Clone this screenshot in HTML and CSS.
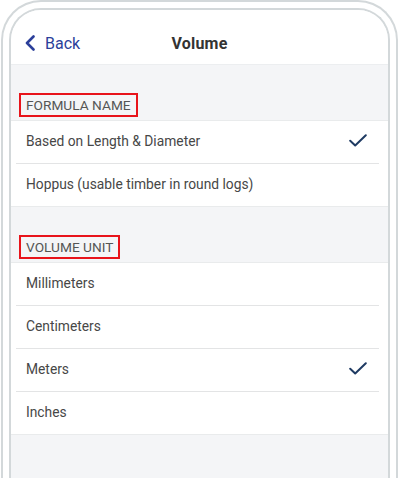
FILE: index.html
```html
<!DOCTYPE html>
<html>
<head>
<meta charset="utf-8">
<link rel="stylesheet" href="styles.css">
</head>
<body>
<div class="phone">
  <div class="screen">
    <header class="header">
      <div class="header-row">
        <a class="back">
          <svg class="chev" width="12" height="16" viewBox="0 0 12 16"><polyline points="9.5,1.5 3,8 9.5,14.5" fill="none" stroke="#2b3f9a" stroke-width="2.6" stroke-linecap="round" stroke-linejoin="round"/></svg>
          <span>Back</span>
        </a>
        <div class="title">Volume</div>
        <div class="spacer"></div>
      </div>
    </header>

    <div class="section-head"><span class="label">FORMULA NAME</span></div>
    <div class="list">
      <div class="row"><span>Based on Length &amp; Diameter</span>
        <svg class="check" width="18" height="13" viewBox="0 0 18 13"><polyline points="1.2,6.8 6.2,11.5 16.8,1.2" fill="none" stroke="#1f3b63" stroke-width="2" stroke-linecap="round" stroke-linejoin="round"/></svg>
      </div>
      <div class="row last"><span>Hoppus (usable timber in round logs)</span></div>
    </div>

    <div class="section-head"><span class="label">VOLUME UNIT</span></div>
    <div class="list">
      <div class="row"><span>Millimeters</span></div>
      <div class="row"><span>Centimeters</span></div>
      <div class="row"><span>Meters</span>
        <svg class="check" width="18" height="13" viewBox="0 0 18 13"><polyline points="1.2,6.8 6.2,11.5 16.8,1.2" fill="none" stroke="#1f3b63" stroke-width="2" stroke-linecap="round" stroke-linejoin="round"/></svg>
      </div>
      <div class="row last"><span>Inches</span></div>
    </div>
    <div class="filler"></div>
  </div>
</div>
</body>
</html>
```

FILE: styles.css
```css
html, body {
  margin: 0;
  padding: 0;
  background: #ffffff;
  overflow: hidden;
  width: 400px;
  height: 478px;
}
body {
  font-family: Roboto, "Liberation Sans", sans-serif;
}
.phone {
  box-sizing: border-box;
  margin-left: 1px;
  width: 397px;
  height: 478px;
  border: 2px solid #d3d8da;
  border-bottom: none;
  border-radius: 40px 40px 0 0;
  padding: 6px 6px 0 6px;
  background: #fff;
}
.screen {
  box-sizing: border-box;
  height: 100%;
  border: 2px solid #d3d8da;
  border-bottom: none;
  border-radius: 32px 32px 0 0;
  background: #f4f5f7;
  overflow: hidden;
  display: flex;
  flex-direction: column;
}
.header {
  background: #ffffff;
  padding-top: 12px;
  border-bottom: 1px solid #eceef0;
}
.header-row {
  height: 42px;
  display: flex;
  align-items: center;
  padding: 0 13px;
}
.back {
  display: flex;
  align-items: center;
  gap: 9px;
  color: #2b3f9a;
  font-size: 16px;
  flex: 1;
}
.chev {
  display: block;
}
.title {
  font-size: 16px;
  font-weight: 700;
  color: #333333;
  letter-spacing: 0.2px;
}
.spacer {
  flex: 1;
}
.section-head {
  height: 55px;
  box-sizing: border-box;
  padding: 28px 0 0 8px;
}
.label {
  display: inline-block;
  border: 2px solid #e8141b;
  padding: 0 5px;
  line-height: 20px;
  font-size: 13.7px;
  color: #555555;
}
.list {
  background: #ffffff;
  border-top: 1px solid #e9ebec;
  border-bottom: 1px solid #e9ebec;
}
.row {
  box-sizing: border-box;
  height: 43px;
  margin: 0 9px 0 5px;
  padding: 0 12px 3px 10px;
  border-bottom: 1px solid #e3e4e5;
  display: flex;
  align-items: center;
  justify-content: space-between;
  font-size: 13.8px;
  line-height: 36px;
  color: #474747;
}
.row.last {
  border-bottom: none;
  height: 42px;
}
.check {
  display: block;
}
.filler {
  flex: 1;
}
```
